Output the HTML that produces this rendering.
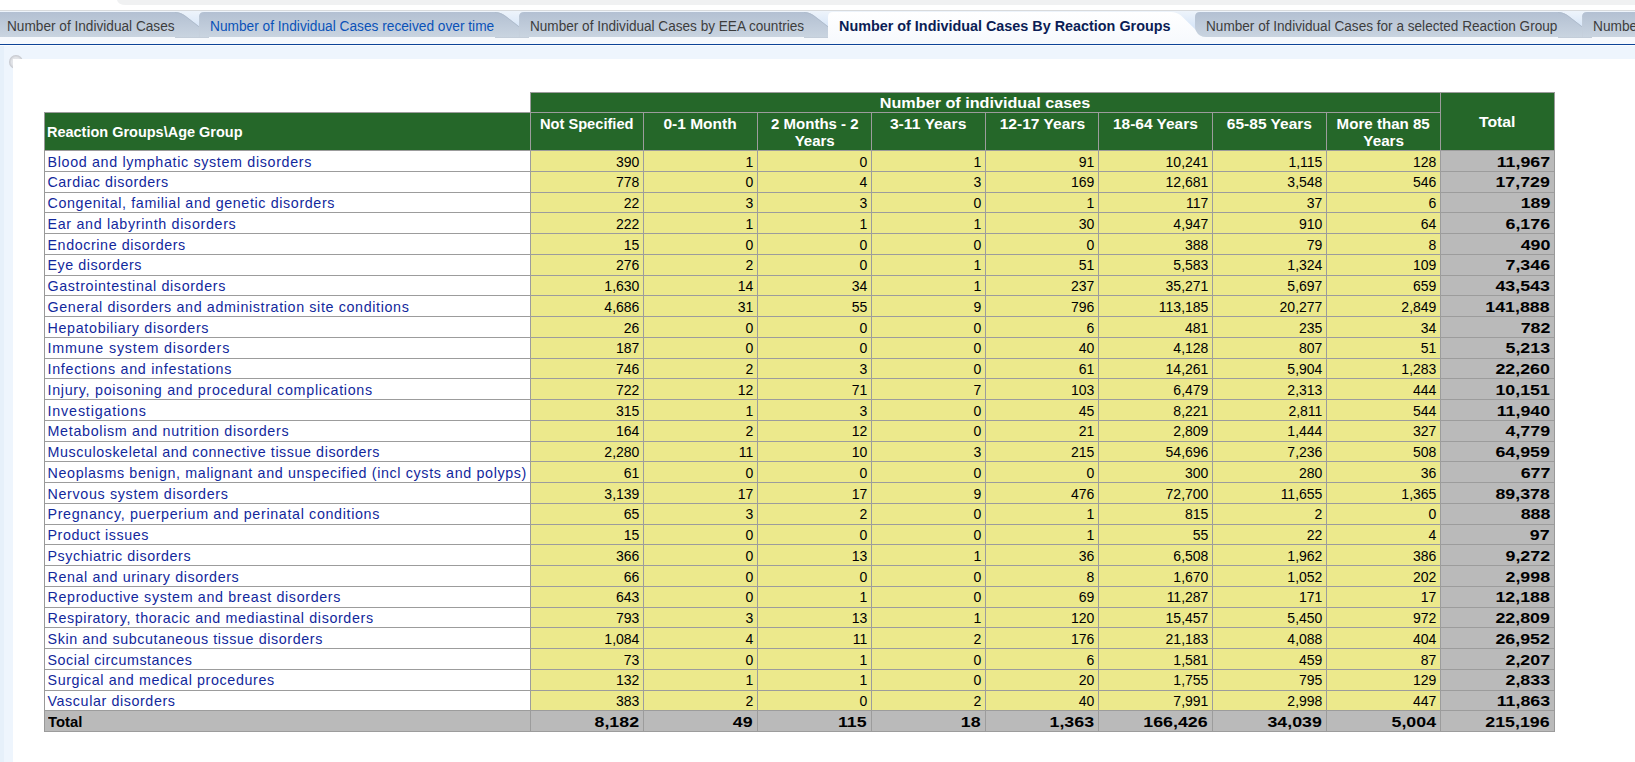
<!DOCTYPE html><html><head><meta charset="utf-8"><title>Number of Individual Cases By Reaction Groups</title><style>
html,body{margin:0;padding:0}
body{width:1635px;height:762px;overflow:hidden;position:relative;background:#fff;font-family:'Liberation Sans',sans-serif}
.a{position:absolute}
.t{position:absolute;white-space:pre;line-height:1;}
.tab{position:absolute;top:18.2px;font-size:14px;white-space:pre;transform-origin:0 0}
.lab{position:absolute;left:47.5px;font-size:14.3px;color:#12289c;white-space:pre;letter-spacing:0.9px}
.num{position:absolute;font-size:14px;color:#000;white-space:pre;text-align:right;letter-spacing:0px}
.bn{position:absolute;font-size:14px;font-weight:bold;color:#000;white-space:pre;transform-origin:100% 0}
.hd{position:absolute;font-size:14px;font-weight:bold;color:#fff;white-space:pre;transform-origin:50% 0}

</style></head><body>
<svg class="a" style="left:0;top:0" width="1635" height="46" viewBox="0 0 1635 46"><defs><linearGradient id="tg" x1="0" y1="0" x2="0" y2="1"><stop offset="0" stop-color="#b3c0d2"/><stop offset="1" stop-color="#c9d4e0"/></linearGradient><linearGradient id="gg" x1="0" y1="0" x2="0" y2="1"><stop offset="0" stop-color="#eef4fb"/><stop offset="1" stop-color="#c9ddf6"/></linearGradient><linearGradient id="sg" x1="0" y1="0" x2="0" y2="1"><stop offset="0" stop-color="#ffffff"/><stop offset="1" stop-color="#f6f9fd"/></linearGradient></defs><rect x="0" y="0" width="1635" height="46" fill="#fff"/><path d="M117,0 H1635 V5 H126 Q118,5 117,0 Z" fill="#f0f1f2"/><rect x="0" y="10" width="1635" height="1" fill="#d8dadc"/><rect x="0" y="11" width="1635" height="26" fill="url(#gg)"/><rect x="0" y="37" width="1635" height="7" fill="#f6f9fd"/><rect x="0" y="44" width="1635" height="1" fill="#0d4397"/><rect x="0" y="45" width="1635" height="1" fill="#fbfdff"/><path d="M0,37 V12 H175 C179,12 182,13.5 185,15.5 L199,26.3 V37 Z" fill="url(#tg)"/><path d="M175,12.5 C179,12.5 182,14 185,16 L199,26.8" fill="none" stroke="#aebbcc" stroke-width="0.9"/><rect x="175" y="37" width="34" height="1" fill="#c3cdd9"/><path d="M199,37 V17 Q199,12 204,12 H495 C499,12 502,13.5 505,15.5 L519,26.3 V37 Z" fill="url(#tg)"/><path d="M495,12.5 C499,12.5 502,14 505,16 L519,26.8" fill="none" stroke="#aebbcc" stroke-width="0.9"/><rect x="495" y="37" width="34" height="1" fill="#c3cdd9"/><rect x="199" y="17" width="1" height="20" fill="#c3cdd9" opacity="0.5"/><path d="M519,37 V17 Q519,12 524,12 H804 C808,12 811,13.5 814,15.5 L828,26.3 V37 Z" fill="url(#tg)"/><path d="M804,12.5 C808,12.5 811,14 814,16 L828,26.8" fill="none" stroke="#aebbcc" stroke-width="0.9"/><rect x="804" y="37" width="34" height="1" fill="#c3cdd9"/><rect x="519" y="17" width="1" height="20" fill="#c3cdd9" opacity="0.5"/><path d="M828,44 V17 Q828,12 833,12 H1171 C1175,12 1178,13.5 1181,15.5 L1197,31 L1211,37 V44 H828 Z" fill="url(#sg)"/><path d="M1206,37 Q1199,37 1196,31 Q1195,29 1195,26 V17 Q1195,12 1200,12 H1558 C1562,12 1565,13.5 1568,15.5 L1582,26.3 V37 Z" fill="url(#tg)"/><path d="M1558,12.5 C1562,12.5 1565,14 1568,16 L1582,26.8" fill="none" stroke="#aebbcc" stroke-width="0.9"/><rect x="1558" y="37" width="34" height="1" fill="#c3cdd9"/><path d="M1582,37 V17 Q1582,12 1587,12 H1901 C1905,12 1908,13.5 1911,15.5 L1925,26.3 V37 Z" fill="url(#tg)"/><path d="M1901,12.5 C1905,12.5 1908,14 1911,16 L1925,26.8" fill="none" stroke="#aebbcc" stroke-width="0.9"/><rect x="1901" y="37" width="34" height="1" fill="#c3cdd9"/><rect x="1582" y="17" width="1" height="20" fill="#c3cdd9" opacity="0.5"/></svg>
<div class="tab" style="left:6.90px;color:#3d3d3d;;transform:scaleX(0.9745)">Number of Individual Cases</div>
<div class="tab" style="left:210.30px;color:#0a52b8;;transform:scaleX(0.9792)">Number of Individual Cases received over time</div>
<div class="tab" style="left:529.50px;color:#3d3d3d;;transform:scaleX(0.9703)">Number of Individual Cases by EEA countries</div>
<div class="tab" style="left:839.00px;color:#0b1d55;font-weight:bold;transform:scaleX(1.0268)">Number of Individual Cases By Reaction Groups</div>
<div class="tab" style="left:1206.10px;color:#3d3d3d;;transform:scaleX(0.9711)">Number of Individual Cases for a selected Reaction Group</div>
<div class="tab" style="left:1592.70px;color:#3d3d3d;;transform:scaleX(0.9792)">Number of Individual Cases</div>
<div class="a" style="left:0;top:46px;width:1635px;height:716px;background:#eef5fd"></div>
<div class="a" style="left:0;top:46px;width:4px;height:716px;background:#e6f0fa"></div>
<div class="a" style="left:9px;top:55px;width:14px;height:14px;border-radius:50%;background:radial-gradient(circle at 50% 50%, #e6e8ec 0, #e2e4e8 45%, #c4c6cc 70%, #d4d6da 85%, rgba(238,245,253,0) 100%)"></div>
<div class="a" style="left:13px;top:59px;width:1622px;height:703px;background:#fff"></div>
<div class="a" style="left:530px;top:92px;width:1025px;height:59px;background:#256729"></div>
<div class="a" style="left:44px;top:112px;width:487px;height:39px;background:#256729"></div>
<div class="a" style="left:530px;top:150px;width:911px;height:560px;background:#ece98c"></div>
<div class="a" style="left:1440px;top:150px;width:115px;height:582px;background:#bababa"></div>
<div class="a" style="left:44px;top:710px;width:1511px;height:22px;background:#bababa"></div>
<div class="a" style="left:530px;top:92px;width:1025px;height:1px;background:#9c9c9c"></div>
<div class="a" style="left:44px;top:112px;width:1397px;height:1px;background:#9c9c9c"></div>
<div class="a" style="left:44px;top:150px;width:1511px;height:1px;background:#9c9c9c"></div>
<div class="a" style="left:44px;top:171px;width:1511px;height:1px;background:#9c9c9c"></div>
<div class="a" style="left:44px;top:192px;width:1511px;height:1px;background:#9c9c9c"></div>
<div class="a" style="left:44px;top:212px;width:1511px;height:1px;background:#9c9c9c"></div>
<div class="a" style="left:44px;top:233px;width:1511px;height:1px;background:#9c9c9c"></div>
<div class="a" style="left:44px;top:254px;width:1511px;height:1px;background:#9c9c9c"></div>
<div class="a" style="left:44px;top:275px;width:1511px;height:1px;background:#9c9c9c"></div>
<div class="a" style="left:44px;top:295px;width:1511px;height:1px;background:#9c9c9c"></div>
<div class="a" style="left:44px;top:316px;width:1511px;height:1px;background:#9c9c9c"></div>
<div class="a" style="left:44px;top:337px;width:1511px;height:1px;background:#9c9c9c"></div>
<div class="a" style="left:44px;top:358px;width:1511px;height:1px;background:#9c9c9c"></div>
<div class="a" style="left:44px;top:378px;width:1511px;height:1px;background:#9c9c9c"></div>
<div class="a" style="left:44px;top:399px;width:1511px;height:1px;background:#9c9c9c"></div>
<div class="a" style="left:44px;top:420px;width:1511px;height:1px;background:#9c9c9c"></div>
<div class="a" style="left:44px;top:441px;width:1511px;height:1px;background:#9c9c9c"></div>
<div class="a" style="left:44px;top:461px;width:1511px;height:1px;background:#9c9c9c"></div>
<div class="a" style="left:44px;top:482px;width:1511px;height:1px;background:#9c9c9c"></div>
<div class="a" style="left:44px;top:503px;width:1511px;height:1px;background:#9c9c9c"></div>
<div class="a" style="left:44px;top:524px;width:1511px;height:1px;background:#9c9c9c"></div>
<div class="a" style="left:44px;top:544px;width:1511px;height:1px;background:#9c9c9c"></div>
<div class="a" style="left:44px;top:565px;width:1511px;height:1px;background:#9c9c9c"></div>
<div class="a" style="left:44px;top:586px;width:1511px;height:1px;background:#9c9c9c"></div>
<div class="a" style="left:44px;top:607px;width:1511px;height:1px;background:#9c9c9c"></div>
<div class="a" style="left:44px;top:627px;width:1511px;height:1px;background:#9c9c9c"></div>
<div class="a" style="left:44px;top:648px;width:1511px;height:1px;background:#9c9c9c"></div>
<div class="a" style="left:44px;top:669px;width:1511px;height:1px;background:#9c9c9c"></div>
<div class="a" style="left:44px;top:690px;width:1511px;height:1px;background:#9c9c9c"></div>
<div class="a" style="left:44px;top:710px;width:1511px;height:1px;background:#9c9c9c"></div>
<div class="a" style="left:44px;top:731px;width:1511px;height:1px;background:#9c9c9c"></div>
<div class="a" style="left:44px;top:112px;width:1px;height:620px;background:#999999"></div>
<div class="a" style="left:530px;top:92px;width:1px;height:640px;background:#9c9c9c"></div>
<div class="a" style="left:643px;top:112px;width:1px;height:620px;background:#9c9c9c"></div>
<div class="a" style="left:757px;top:112px;width:1px;height:620px;background:#9c9c9c"></div>
<div class="a" style="left:871px;top:112px;width:1px;height:620px;background:#9c9c9c"></div>
<div class="a" style="left:985px;top:112px;width:1px;height:620px;background:#9c9c9c"></div>
<div class="a" style="left:1098px;top:112px;width:1px;height:620px;background:#9c9c9c"></div>
<div class="a" style="left:1212px;top:112px;width:1px;height:620px;background:#9c9c9c"></div>
<div class="a" style="left:1326px;top:112px;width:1px;height:620px;background:#9c9c9c"></div>
<div class="a" style="left:1440px;top:92px;width:1px;height:640px;background:#9c9c9c"></div>
<div class="a" style="left:1554px;top:92px;width:1px;height:640px;background:#999999"></div>
<div class="hd" style="left:893.97px;top:95.98px;line-height:1;transform:scaleX(1.1562)">Number of individual cases</div>
<div class="hd" style="left:47.0px;top:124.98px;line-height:1;transform-origin:0 0;transform:scaleX(1.0343)">Reaction Groups\Age Group</div>
<div class="hd" style="left:542.27px;top:116.68px;line-height:1;transform:scaleX(1.0451)">Not Specified</div>
<div class="hd" style="left:667.45px;top:116.68px;line-height:1;transform:scaleX(1.1073)">0-1 Month</div>
<div class="hd" style="left:773.66px;top:116.68px;line-height:1;transform:scaleX(1.0714)">2 Months - 2</div>
<div class="hd" style="left:795.81px;top:133.68px;line-height:1;transform:scaleX(1.0702)">Years</div>
<div class="hd" style="left:894.37px;top:116.68px;line-height:1;transform:scaleX(1.1206)">3-11 Years</div>
<div class="hd" style="left:1003.59px;top:116.68px;line-height:1;transform:scaleX(1.1129)">12-17 Years</div>
<div class="hd" style="left:1117.09px;top:116.68px;line-height:1;transform:scaleX(1.1051)">18-64 Years</div>
<div class="hd" style="left:1231.09px;top:116.68px;line-height:1;transform:scaleX(1.1077)">65-85 Years</div>
<div class="hd" style="left:1340.32px;top:116.68px;line-height:1;transform:scaleX(1.0792)">More than 85</div>
<div class="hd" style="left:1364.81px;top:133.68px;line-height:1;transform:scaleX(1.0890)">Years</div>
<div class="hd" style="left:1481.30px;top:115.48px;line-height:1;transform:scaleX(1.1263)">Total</div>
<div class="lab" style="top:154.64px;line-height:1;letter-spacing:0.660px">Blood and lymphatic system disorders</div>
<div class="num" style="right:995.6px;top:154.68px;line-height:1">390</div>
<div class="num" style="right:881.6px;top:154.68px;line-height:1">1</div>
<div class="num" style="right:767.6px;top:154.68px;line-height:1">0</div>
<div class="num" style="right:653.6px;top:154.68px;line-height:1">1</div>
<div class="num" style="right:540.5999999999999px;top:154.68px;line-height:1">91</div>
<div class="num" style="right:426.5999999999999px;top:154.68px;line-height:1">10,241</div>
<div class="num" style="right:312.5999999999999px;top:154.68px;line-height:1">1,115</div>
<div class="num" style="right:198.5999999999999px;top:154.68px;line-height:1">128</div>
<div class="bn" style="left:1507.94px;top:154.68px;line-height:1;transform:scaleX(1.27)">11,967</div>
<div class="lab" style="top:175.39px;line-height:1;letter-spacing:0.537px">Cardiac disorders</div>
<div class="num" style="right:995.6px;top:175.43px;line-height:1">778</div>
<div class="num" style="right:881.6px;top:175.43px;line-height:1">0</div>
<div class="num" style="right:767.6px;top:175.43px;line-height:1">4</div>
<div class="num" style="right:653.6px;top:175.43px;line-height:1">3</div>
<div class="num" style="right:540.5999999999999px;top:175.43px;line-height:1">169</div>
<div class="num" style="right:426.5999999999999px;top:175.43px;line-height:1">12,681</div>
<div class="num" style="right:312.5999999999999px;top:175.43px;line-height:1">3,548</div>
<div class="num" style="right:198.5999999999999px;top:175.43px;line-height:1">546</div>
<div class="bn" style="left:1507.17px;top:175.43px;line-height:1;transform:scaleX(1.27)">17,729</div>
<div class="lab" style="top:196.14px;line-height:1;letter-spacing:0.622px">Congenital, familial and genetic disorders</div>
<div class="num" style="right:995.6px;top:196.18px;line-height:1">22</div>
<div class="num" style="right:881.6px;top:196.18px;line-height:1">3</div>
<div class="num" style="right:767.6px;top:196.18px;line-height:1">3</div>
<div class="num" style="right:653.6px;top:196.18px;line-height:1">0</div>
<div class="num" style="right:540.5999999999999px;top:196.18px;line-height:1">1</div>
<div class="num" style="right:426.5999999999999px;top:196.18px;line-height:1">117</div>
<div class="num" style="right:312.5999999999999px;top:196.18px;line-height:1">37</div>
<div class="num" style="right:198.5999999999999px;top:196.18px;line-height:1">6</div>
<div class="bn" style="left:1526.64px;top:196.18px;line-height:1;transform:scaleX(1.27)">189</div>
<div class="lab" style="top:216.89px;line-height:1;letter-spacing:0.669px">Ear and labyrinth disorders</div>
<div class="num" style="right:995.6px;top:216.93px;line-height:1">222</div>
<div class="num" style="right:881.6px;top:216.93px;line-height:1">1</div>
<div class="num" style="right:767.6px;top:216.93px;line-height:1">1</div>
<div class="num" style="right:653.6px;top:216.93px;line-height:1">1</div>
<div class="num" style="right:540.5999999999999px;top:216.93px;line-height:1">30</div>
<div class="num" style="right:426.5999999999999px;top:216.93px;line-height:1">4,947</div>
<div class="num" style="right:312.5999999999999px;top:216.93px;line-height:1">910</div>
<div class="num" style="right:198.5999999999999px;top:216.93px;line-height:1">64</div>
<div class="bn" style="left:1514.95px;top:216.93px;line-height:1;transform:scaleX(1.27)">6,176</div>
<div class="lab" style="top:237.64px;line-height:1;letter-spacing:0.589px">Endocrine disorders</div>
<div class="num" style="right:995.6px;top:237.68px;line-height:1">15</div>
<div class="num" style="right:881.6px;top:237.68px;line-height:1">0</div>
<div class="num" style="right:767.6px;top:237.68px;line-height:1">0</div>
<div class="num" style="right:653.6px;top:237.68px;line-height:1">0</div>
<div class="num" style="right:540.5999999999999px;top:237.68px;line-height:1">0</div>
<div class="num" style="right:426.5999999999999px;top:237.68px;line-height:1">388</div>
<div class="num" style="right:312.5999999999999px;top:237.68px;line-height:1">79</div>
<div class="num" style="right:198.5999999999999px;top:237.68px;line-height:1">8</div>
<div class="bn" style="left:1526.64px;top:237.68px;line-height:1;transform:scaleX(1.27)">490</div>
<div class="lab" style="top:258.39px;line-height:1;letter-spacing:0.550px">Eye disorders</div>
<div class="num" style="right:995.6px;top:258.43px;line-height:1">276</div>
<div class="num" style="right:881.6px;top:258.43px;line-height:1">2</div>
<div class="num" style="right:767.6px;top:258.43px;line-height:1">0</div>
<div class="num" style="right:653.6px;top:258.43px;line-height:1">1</div>
<div class="num" style="right:540.5999999999999px;top:258.43px;line-height:1">51</div>
<div class="num" style="right:426.5999999999999px;top:258.43px;line-height:1">5,583</div>
<div class="num" style="right:312.5999999999999px;top:258.43px;line-height:1">1,324</div>
<div class="num" style="right:198.5999999999999px;top:258.43px;line-height:1">109</div>
<div class="bn" style="left:1514.95px;top:258.43px;line-height:1;transform:scaleX(1.27)">7,346</div>
<div class="lab" style="top:279.14px;line-height:1;letter-spacing:0.628px">Gastrointestinal disorders</div>
<div class="num" style="right:995.6px;top:279.18px;line-height:1">1,630</div>
<div class="num" style="right:881.6px;top:279.18px;line-height:1">14</div>
<div class="num" style="right:767.6px;top:279.18px;line-height:1">34</div>
<div class="num" style="right:653.6px;top:279.18px;line-height:1">1</div>
<div class="num" style="right:540.5999999999999px;top:279.18px;line-height:1">237</div>
<div class="num" style="right:426.5999999999999px;top:279.18px;line-height:1">35,271</div>
<div class="num" style="right:312.5999999999999px;top:279.18px;line-height:1">5,697</div>
<div class="num" style="right:198.5999999999999px;top:279.18px;line-height:1">659</div>
<div class="bn" style="left:1507.17px;top:279.18px;line-height:1;transform:scaleX(1.27)">43,543</div>
<div class="lab" style="top:299.89px;line-height:1;letter-spacing:0.633px">General disorders and administration site conditions</div>
<div class="num" style="right:995.6px;top:299.93px;line-height:1">4,686</div>
<div class="num" style="right:881.6px;top:299.93px;line-height:1">31</div>
<div class="num" style="right:767.6px;top:299.93px;line-height:1">55</div>
<div class="num" style="right:653.6px;top:299.93px;line-height:1">9</div>
<div class="num" style="right:540.5999999999999px;top:299.93px;line-height:1">796</div>
<div class="num" style="right:426.5999999999999px;top:299.93px;line-height:1">113,185</div>
<div class="num" style="right:312.5999999999999px;top:299.93px;line-height:1">20,277</div>
<div class="num" style="right:198.5999999999999px;top:299.93px;line-height:1">2,849</div>
<div class="bn" style="left:1499.39px;top:299.93px;line-height:1;transform:scaleX(1.27)">141,888</div>
<div class="lab" style="top:320.64px;line-height:1;letter-spacing:0.673px">Hepatobiliary disorders</div>
<div class="num" style="right:995.6px;top:320.68px;line-height:1">26</div>
<div class="num" style="right:881.6px;top:320.68px;line-height:1">0</div>
<div class="num" style="right:767.6px;top:320.68px;line-height:1">0</div>
<div class="num" style="right:653.6px;top:320.68px;line-height:1">0</div>
<div class="num" style="right:540.5999999999999px;top:320.68px;line-height:1">6</div>
<div class="num" style="right:426.5999999999999px;top:320.68px;line-height:1">481</div>
<div class="num" style="right:312.5999999999999px;top:320.68px;line-height:1">235</div>
<div class="num" style="right:198.5999999999999px;top:320.68px;line-height:1">34</div>
<div class="bn" style="left:1526.64px;top:320.68px;line-height:1;transform:scaleX(1.27)">782</div>
<div class="lab" style="top:341.39px;line-height:1;letter-spacing:0.827px">Immune system disorders</div>
<div class="num" style="right:995.6px;top:341.43px;line-height:1">187</div>
<div class="num" style="right:881.6px;top:341.43px;line-height:1">0</div>
<div class="num" style="right:767.6px;top:341.43px;line-height:1">0</div>
<div class="num" style="right:653.6px;top:341.43px;line-height:1">0</div>
<div class="num" style="right:540.5999999999999px;top:341.43px;line-height:1">40</div>
<div class="num" style="right:426.5999999999999px;top:341.43px;line-height:1">4,128</div>
<div class="num" style="right:312.5999999999999px;top:341.43px;line-height:1">807</div>
<div class="num" style="right:198.5999999999999px;top:341.43px;line-height:1">51</div>
<div class="bn" style="left:1514.95px;top:341.43px;line-height:1;transform:scaleX(1.27)">5,213</div>
<div class="lab" style="top:362.14px;line-height:1;letter-spacing:0.715px">Infections and infestations</div>
<div class="num" style="right:995.6px;top:362.18px;line-height:1">746</div>
<div class="num" style="right:881.6px;top:362.18px;line-height:1">2</div>
<div class="num" style="right:767.6px;top:362.18px;line-height:1">3</div>
<div class="num" style="right:653.6px;top:362.18px;line-height:1">0</div>
<div class="num" style="right:540.5999999999999px;top:362.18px;line-height:1">61</div>
<div class="num" style="right:426.5999999999999px;top:362.18px;line-height:1">14,261</div>
<div class="num" style="right:312.5999999999999px;top:362.18px;line-height:1">5,904</div>
<div class="num" style="right:198.5999999999999px;top:362.18px;line-height:1">1,283</div>
<div class="bn" style="left:1507.17px;top:362.18px;line-height:1;transform:scaleX(1.27)">22,260</div>
<div class="lab" style="top:382.89px;line-height:1;letter-spacing:0.704px">Injury, poisoning and procedural complications</div>
<div class="num" style="right:995.6px;top:382.93px;line-height:1">722</div>
<div class="num" style="right:881.6px;top:382.93px;line-height:1">12</div>
<div class="num" style="right:767.6px;top:382.93px;line-height:1">71</div>
<div class="num" style="right:653.6px;top:382.93px;line-height:1">7</div>
<div class="num" style="right:540.5999999999999px;top:382.93px;line-height:1">103</div>
<div class="num" style="right:426.5999999999999px;top:382.93px;line-height:1">6,479</div>
<div class="num" style="right:312.5999999999999px;top:382.93px;line-height:1">2,313</div>
<div class="num" style="right:198.5999999999999px;top:382.93px;line-height:1">444</div>
<div class="bn" style="left:1507.17px;top:382.93px;line-height:1;transform:scaleX(1.27)">10,151</div>
<div class="lab" style="top:403.64px;line-height:1;letter-spacing:0.838px">Investigations</div>
<div class="num" style="right:995.6px;top:403.68px;line-height:1">315</div>
<div class="num" style="right:881.6px;top:403.68px;line-height:1">1</div>
<div class="num" style="right:767.6px;top:403.68px;line-height:1">3</div>
<div class="num" style="right:653.6px;top:403.68px;line-height:1">0</div>
<div class="num" style="right:540.5999999999999px;top:403.68px;line-height:1">45</div>
<div class="num" style="right:426.5999999999999px;top:403.68px;line-height:1">8,221</div>
<div class="num" style="right:312.5999999999999px;top:403.68px;line-height:1">2,811</div>
<div class="num" style="right:198.5999999999999px;top:403.68px;line-height:1">544</div>
<div class="bn" style="left:1507.94px;top:403.68px;line-height:1;transform:scaleX(1.27)">11,940</div>
<div class="lab" style="top:424.39px;line-height:1;letter-spacing:0.682px">Metabolism and nutrition disorders</div>
<div class="num" style="right:995.6px;top:424.43px;line-height:1">164</div>
<div class="num" style="right:881.6px;top:424.43px;line-height:1">2</div>
<div class="num" style="right:767.6px;top:424.43px;line-height:1">12</div>
<div class="num" style="right:653.6px;top:424.43px;line-height:1">0</div>
<div class="num" style="right:540.5999999999999px;top:424.43px;line-height:1">21</div>
<div class="num" style="right:426.5999999999999px;top:424.43px;line-height:1">2,809</div>
<div class="num" style="right:312.5999999999999px;top:424.43px;line-height:1">1,444</div>
<div class="num" style="right:198.5999999999999px;top:424.43px;line-height:1">327</div>
<div class="bn" style="left:1514.95px;top:424.43px;line-height:1;transform:scaleX(1.27)">4,779</div>
<div class="lab" style="top:445.14px;line-height:1;letter-spacing:0.565px">Musculoskeletal and connective tissue disorders</div>
<div class="num" style="right:995.6px;top:445.18px;line-height:1">2,280</div>
<div class="num" style="right:881.6px;top:445.18px;line-height:1">11</div>
<div class="num" style="right:767.6px;top:445.18px;line-height:1">10</div>
<div class="num" style="right:653.6px;top:445.18px;line-height:1">3</div>
<div class="num" style="right:540.5999999999999px;top:445.18px;line-height:1">215</div>
<div class="num" style="right:426.5999999999999px;top:445.18px;line-height:1">54,696</div>
<div class="num" style="right:312.5999999999999px;top:445.18px;line-height:1">7,236</div>
<div class="num" style="right:198.5999999999999px;top:445.18px;line-height:1">508</div>
<div class="bn" style="left:1507.17px;top:445.18px;line-height:1;transform:scaleX(1.27)">64,959</div>
<div class="lab" style="top:465.89px;line-height:1;letter-spacing:0.633px">Neoplasms benign, malignant and unspecified (incl cysts and polyps)</div>
<div class="num" style="right:995.6px;top:465.93px;line-height:1">61</div>
<div class="num" style="right:881.6px;top:465.93px;line-height:1">0</div>
<div class="num" style="right:767.6px;top:465.93px;line-height:1">0</div>
<div class="num" style="right:653.6px;top:465.93px;line-height:1">0</div>
<div class="num" style="right:540.5999999999999px;top:465.93px;line-height:1">0</div>
<div class="num" style="right:426.5999999999999px;top:465.93px;line-height:1">300</div>
<div class="num" style="right:312.5999999999999px;top:465.93px;line-height:1">280</div>
<div class="num" style="right:198.5999999999999px;top:465.93px;line-height:1">36</div>
<div class="bn" style="left:1526.64px;top:465.93px;line-height:1;transform:scaleX(1.27)">677</div>
<div class="lab" style="top:486.64px;line-height:1;letter-spacing:0.657px">Nervous system disorders</div>
<div class="num" style="right:995.6px;top:486.68px;line-height:1">3,139</div>
<div class="num" style="right:881.6px;top:486.68px;line-height:1">17</div>
<div class="num" style="right:767.6px;top:486.68px;line-height:1">17</div>
<div class="num" style="right:653.6px;top:486.68px;line-height:1">9</div>
<div class="num" style="right:540.5999999999999px;top:486.68px;line-height:1">476</div>
<div class="num" style="right:426.5999999999999px;top:486.68px;line-height:1">72,700</div>
<div class="num" style="right:312.5999999999999px;top:486.68px;line-height:1">11,655</div>
<div class="num" style="right:198.5999999999999px;top:486.68px;line-height:1">1,365</div>
<div class="bn" style="left:1507.17px;top:486.68px;line-height:1;transform:scaleX(1.27)">89,378</div>
<div class="lab" style="top:507.39px;line-height:1;letter-spacing:0.651px">Pregnancy, puerperium and perinatal conditions</div>
<div class="num" style="right:995.6px;top:507.43px;line-height:1">65</div>
<div class="num" style="right:881.6px;top:507.43px;line-height:1">3</div>
<div class="num" style="right:767.6px;top:507.43px;line-height:1">2</div>
<div class="num" style="right:653.6px;top:507.43px;line-height:1">0</div>
<div class="num" style="right:540.5999999999999px;top:507.43px;line-height:1">1</div>
<div class="num" style="right:426.5999999999999px;top:507.43px;line-height:1">815</div>
<div class="num" style="right:312.5999999999999px;top:507.43px;line-height:1">2</div>
<div class="num" style="right:198.5999999999999px;top:507.43px;line-height:1">0</div>
<div class="bn" style="left:1526.64px;top:507.43px;line-height:1;transform:scaleX(1.27)">888</div>
<div class="lab" style="top:528.14px;line-height:1;letter-spacing:0.546px">Product issues</div>
<div class="num" style="right:995.6px;top:528.18px;line-height:1">15</div>
<div class="num" style="right:881.6px;top:528.18px;line-height:1">0</div>
<div class="num" style="right:767.6px;top:528.18px;line-height:1">0</div>
<div class="num" style="right:653.6px;top:528.18px;line-height:1">0</div>
<div class="num" style="right:540.5999999999999px;top:528.18px;line-height:1">1</div>
<div class="num" style="right:426.5999999999999px;top:528.18px;line-height:1">55</div>
<div class="num" style="right:312.5999999999999px;top:528.18px;line-height:1">22</div>
<div class="num" style="right:198.5999999999999px;top:528.18px;line-height:1">4</div>
<div class="bn" style="left:1534.42px;top:528.18px;line-height:1;transform:scaleX(1.27)">97</div>
<div class="lab" style="top:548.89px;line-height:1;letter-spacing:0.560px">Psychiatric disorders</div>
<div class="num" style="right:995.6px;top:548.93px;line-height:1">366</div>
<div class="num" style="right:881.6px;top:548.93px;line-height:1">0</div>
<div class="num" style="right:767.6px;top:548.93px;line-height:1">13</div>
<div class="num" style="right:653.6px;top:548.93px;line-height:1">1</div>
<div class="num" style="right:540.5999999999999px;top:548.93px;line-height:1">36</div>
<div class="num" style="right:426.5999999999999px;top:548.93px;line-height:1">6,508</div>
<div class="num" style="right:312.5999999999999px;top:548.93px;line-height:1">1,962</div>
<div class="num" style="right:198.5999999999999px;top:548.93px;line-height:1">386</div>
<div class="bn" style="left:1514.95px;top:548.93px;line-height:1;transform:scaleX(1.27)">9,272</div>
<div class="lab" style="top:569.64px;line-height:1;letter-spacing:0.600px">Renal and urinary disorders</div>
<div class="num" style="right:995.6px;top:569.68px;line-height:1">66</div>
<div class="num" style="right:881.6px;top:569.68px;line-height:1">0</div>
<div class="num" style="right:767.6px;top:569.68px;line-height:1">0</div>
<div class="num" style="right:653.6px;top:569.68px;line-height:1">0</div>
<div class="num" style="right:540.5999999999999px;top:569.68px;line-height:1">8</div>
<div class="num" style="right:426.5999999999999px;top:569.68px;line-height:1">1,670</div>
<div class="num" style="right:312.5999999999999px;top:569.68px;line-height:1">1,052</div>
<div class="num" style="right:198.5999999999999px;top:569.68px;line-height:1">202</div>
<div class="bn" style="left:1514.95px;top:569.68px;line-height:1;transform:scaleX(1.27)">2,998</div>
<div class="lab" style="top:590.39px;line-height:1;letter-spacing:0.644px">Reproductive system and breast disorders</div>
<div class="num" style="right:995.6px;top:590.43px;line-height:1">643</div>
<div class="num" style="right:881.6px;top:590.43px;line-height:1">0</div>
<div class="num" style="right:767.6px;top:590.43px;line-height:1">1</div>
<div class="num" style="right:653.6px;top:590.43px;line-height:1">0</div>
<div class="num" style="right:540.5999999999999px;top:590.43px;line-height:1">69</div>
<div class="num" style="right:426.5999999999999px;top:590.43px;line-height:1">11,287</div>
<div class="num" style="right:312.5999999999999px;top:590.43px;line-height:1">171</div>
<div class="num" style="right:198.5999999999999px;top:590.43px;line-height:1">17</div>
<div class="bn" style="left:1507.17px;top:590.43px;line-height:1;transform:scaleX(1.27)">12,188</div>
<div class="lab" style="top:611.14px;line-height:1;letter-spacing:0.622px">Respiratory, thoracic and mediastinal disorders</div>
<div class="num" style="right:995.6px;top:611.18px;line-height:1">793</div>
<div class="num" style="right:881.6px;top:611.18px;line-height:1">3</div>
<div class="num" style="right:767.6px;top:611.18px;line-height:1">13</div>
<div class="num" style="right:653.6px;top:611.18px;line-height:1">1</div>
<div class="num" style="right:540.5999999999999px;top:611.18px;line-height:1">120</div>
<div class="num" style="right:426.5999999999999px;top:611.18px;line-height:1">15,457</div>
<div class="num" style="right:312.5999999999999px;top:611.18px;line-height:1">5,450</div>
<div class="num" style="right:198.5999999999999px;top:611.18px;line-height:1">972</div>
<div class="bn" style="left:1507.17px;top:611.18px;line-height:1;transform:scaleX(1.27)">22,809</div>
<div class="lab" style="top:631.89px;line-height:1;letter-spacing:0.597px">Skin and subcutaneous tissue disorders</div>
<div class="num" style="right:995.6px;top:631.93px;line-height:1">1,084</div>
<div class="num" style="right:881.6px;top:631.93px;line-height:1">4</div>
<div class="num" style="right:767.6px;top:631.93px;line-height:1">11</div>
<div class="num" style="right:653.6px;top:631.93px;line-height:1">2</div>
<div class="num" style="right:540.5999999999999px;top:631.93px;line-height:1">176</div>
<div class="num" style="right:426.5999999999999px;top:631.93px;line-height:1">21,183</div>
<div class="num" style="right:312.5999999999999px;top:631.93px;line-height:1">4,088</div>
<div class="num" style="right:198.5999999999999px;top:631.93px;line-height:1">404</div>
<div class="bn" style="left:1507.17px;top:631.93px;line-height:1;transform:scaleX(1.27)">26,952</div>
<div class="lab" style="top:652.64px;line-height:1;letter-spacing:0.532px">Social circumstances</div>
<div class="num" style="right:995.6px;top:652.68px;line-height:1">73</div>
<div class="num" style="right:881.6px;top:652.68px;line-height:1">0</div>
<div class="num" style="right:767.6px;top:652.68px;line-height:1">1</div>
<div class="num" style="right:653.6px;top:652.68px;line-height:1">0</div>
<div class="num" style="right:540.5999999999999px;top:652.68px;line-height:1">6</div>
<div class="num" style="right:426.5999999999999px;top:652.68px;line-height:1">1,581</div>
<div class="num" style="right:312.5999999999999px;top:652.68px;line-height:1">459</div>
<div class="num" style="right:198.5999999999999px;top:652.68px;line-height:1">87</div>
<div class="bn" style="left:1514.95px;top:652.68px;line-height:1;transform:scaleX(1.27)">2,207</div>
<div class="lab" style="top:673.39px;line-height:1;letter-spacing:0.613px">Surgical and medical procedures</div>
<div class="num" style="right:995.6px;top:673.43px;line-height:1">132</div>
<div class="num" style="right:881.6px;top:673.43px;line-height:1">1</div>
<div class="num" style="right:767.6px;top:673.43px;line-height:1">1</div>
<div class="num" style="right:653.6px;top:673.43px;line-height:1">0</div>
<div class="num" style="right:540.5999999999999px;top:673.43px;line-height:1">20</div>
<div class="num" style="right:426.5999999999999px;top:673.43px;line-height:1">1,755</div>
<div class="num" style="right:312.5999999999999px;top:673.43px;line-height:1">795</div>
<div class="num" style="right:198.5999999999999px;top:673.43px;line-height:1">129</div>
<div class="bn" style="left:1514.95px;top:673.43px;line-height:1;transform:scaleX(1.27)">2,833</div>
<div class="lab" style="top:694.14px;line-height:1;letter-spacing:0.594px">Vascular disorders</div>
<div class="num" style="right:995.6px;top:694.18px;line-height:1">383</div>
<div class="num" style="right:881.6px;top:694.18px;line-height:1">2</div>
<div class="num" style="right:767.6px;top:694.18px;line-height:1">0</div>
<div class="num" style="right:653.6px;top:694.18px;line-height:1">2</div>
<div class="num" style="right:540.5999999999999px;top:694.18px;line-height:1">40</div>
<div class="num" style="right:426.5999999999999px;top:694.18px;line-height:1">7,991</div>
<div class="num" style="right:312.5999999999999px;top:694.18px;line-height:1">2,998</div>
<div class="num" style="right:198.5999999999999px;top:694.18px;line-height:1">447</div>
<div class="bn" style="left:1507.94px;top:694.18px;line-height:1;transform:scaleX(1.27)">11,863</div>
<div class="bn" style="left:47.5px;top:714.93px;line-height:1;transform-origin:0 0;transform:scaleX(1.0584)">Total</div>
<div class="bn" style="left:603.95px;top:714.93px;line-height:1;transform:scaleX(1.27)">8,182</div>
<div class="bn" style="left:737.42px;top:714.93px;line-height:1;transform:scaleX(1.27)">49</div>
<div class="bn" style="left:844.41px;top:714.93px;line-height:1;transform:scaleX(1.27)">115</div>
<div class="bn" style="left:965.42px;top:714.93px;line-height:1;transform:scaleX(1.27)">18</div>
<div class="bn" style="left:1058.95px;top:714.93px;line-height:1;transform:scaleX(1.27)">1,363</div>
<div class="bn" style="left:1157.39px;top:714.93px;line-height:1;transform:scaleX(1.27)">166,426</div>
<div class="bn" style="left:1279.17px;top:714.93px;line-height:1;transform:scaleX(1.27)">34,039</div>
<div class="bn" style="left:1400.95px;top:714.93px;line-height:1;transform:scaleX(1.27)">5,004</div>
<div class="bn" style="left:1499.39px;top:714.93px;line-height:1;transform:scaleX(1.27)">215,196</div>
</body></html>
